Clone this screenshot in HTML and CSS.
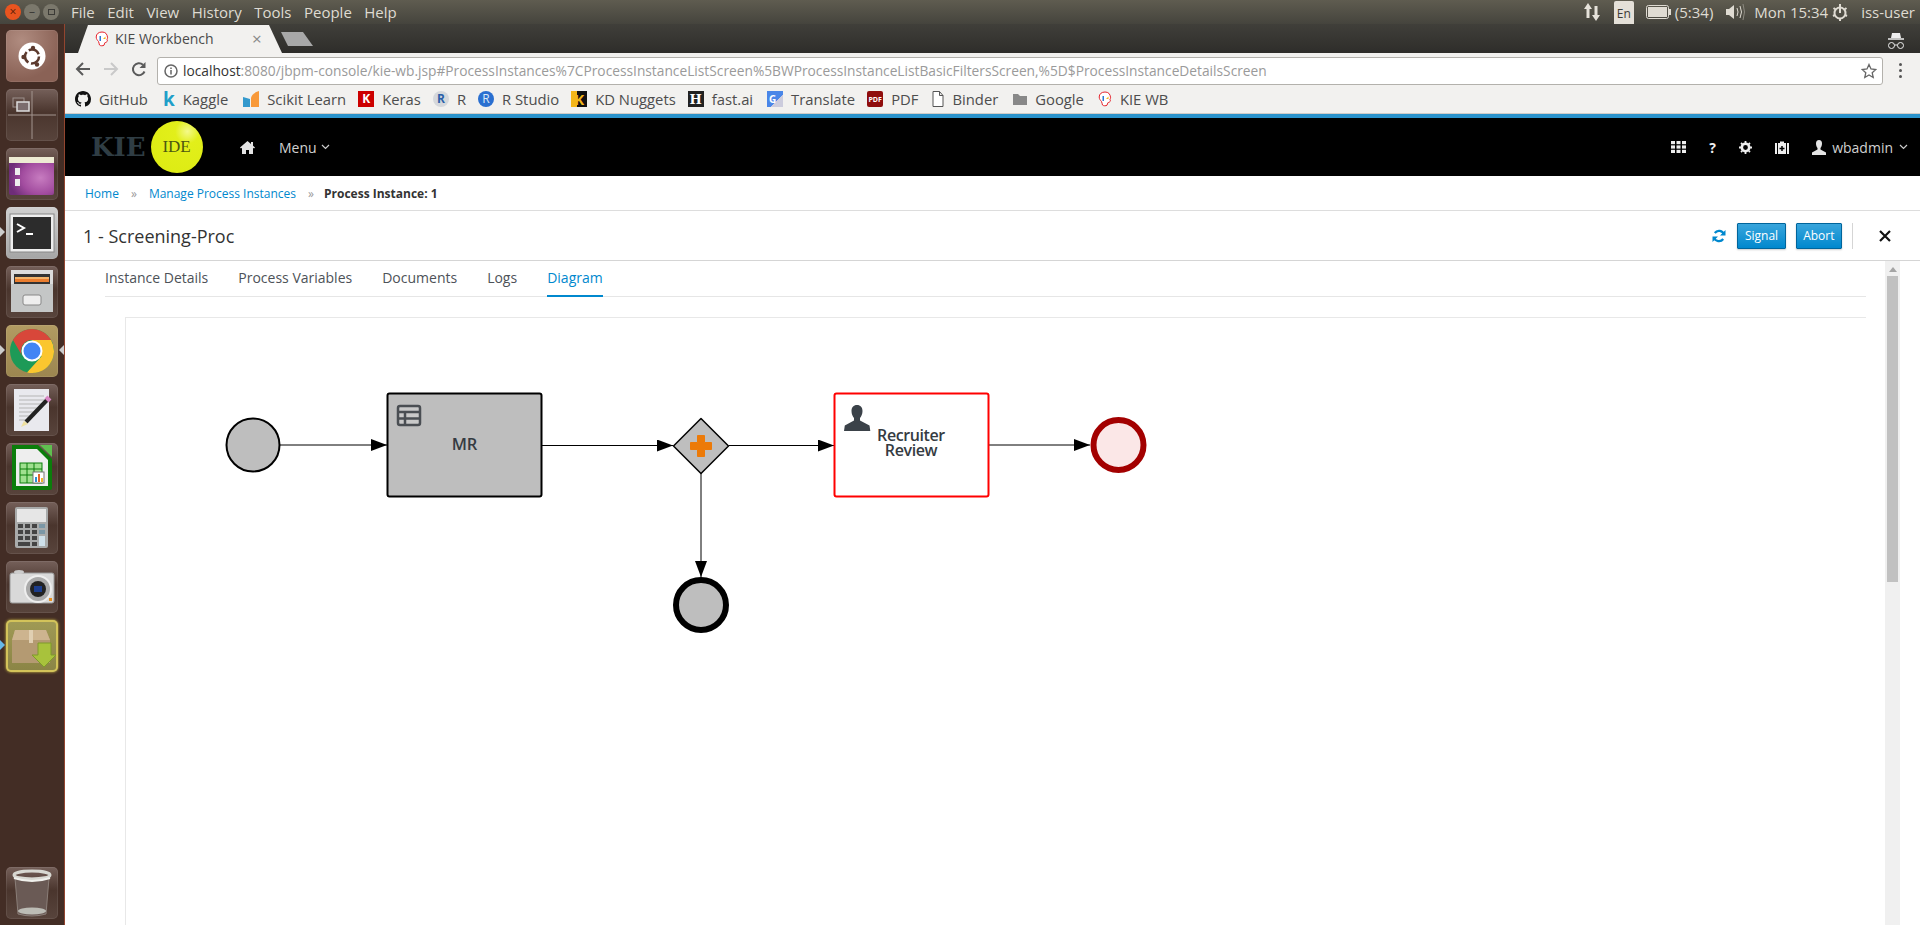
FILE: index.html
```html
<!DOCTYPE html>
<html lang="en">
<head>
    <meta charset="UTF-8">
    <meta name="viewport" content="width=device-width, initial-scale=1.0">
    <title>KIE Workbench</title>
    <link rel="stylesheet" href="styles.css">
</head>
<body>
    <svg class="defs" width="0" height="0">
        <symbol id="kie" viewBox="0 0 14 16">
            <path d="M7 1C3.5 1 1.2 3 1.2 6c0 2 1.300 3.400 2.300 4.500.6.9.5 2.500 1 3.500.8 1 3.500 1 4.500.2.700-.7.300-1.800.8-2.400 1.500-.7 2.500-1 2.600-2 0-.7-.500-1-.4-1.500.2-.8.7-.9.6-1.500C12.300 3 10.500 1 7 1z" fill="#fff" stroke="#e5222c" stroke-width="1"/>
            <rect x="4.500" y="5" width="1.500" height="5" fill="#2b7bd3"/>
            <path d="M8 8h2.500V5.500z" fill="#f3b61a"/>
        </symbol>
    </svg>

    <!-- ubuntu top panel -->
    <header class="panel">
        <div class="winbtns">
            <span class="winbtn close">×</span>
            <span class="winbtn">–</span>
            <span class="winbtn"><i class="maxbox"></i></span>
        </div>
        <nav class="appmenu">
            <span>File</span><span>Edit</span><span>View</span><span>History</span><span>Tools</span><span>People</span><span>Help</span>
        </nav>
        <div class="tray">
            <svg class="tray-arrows" width="18" height="20" viewBox="0 0 18 20"><path d="M5 1L1 7h2.500v9h3V7H9zM13 19l4-6h-2.500V4h-3v9H9z" fill="#e6e2da"/></svg>
            <span class="lang">En</span>
            <span class="battery-wrap">
                <svg width="25" height="14" viewBox="0 0 25 14"><rect x=".5" y=".5" width="22" height="13" rx="2" fill="none" stroke="#dfdbd2"/><rect x="2" y="2" width="19" height="10" fill="#dfdbd2"/><rect x="23" y="4" width="2" height="6" fill="#dfdbd2"/></svg>
                <span>(5:34)</span>
            </span>
            <svg class="tray-speaker" width="20" height="18" viewBox="0 0 20 18"><path d="M1 6h3l5-4v14l-5-4H1z" fill="#dfdbd2"/><path d="M12 5q2 4 0 8M15 3q3 6 0 12" stroke="#dfdbd2" fill="none"/><path d="M18 1q3 8 0 16" stroke="#8d8a80" fill="none"/></svg>
            <span class="clock">Mon 15:34</span>
            <svg class="tray-gear" width="16" height="18" viewBox="0 0 16 18"><circle cx="8" cy="10" r="5.500" fill="none" stroke="#dfdbd2" stroke-width="2"/><path d="M8 1v9" stroke="#dfdbd2" stroke-width="2"/><path d="M8 1v3M1.500 5l2 1.500M14.500 5l-2 1.500M1 13l2-1M15 13l-2-1M8 16v2" stroke="#dfdbd2" stroke-width="2"/></svg>
            <span>iss-user</span>
        </div>
    </header>

    <div class="desktop">
        <!-- launcher -->
        <aside class="launcher">
            <div class="tile tile-ubuntu">
                <svg viewBox="0 0 52 52"><circle cx="26" cy="26" r="13.500" fill="#fff"/><circle cx="26" cy="26.500" r="7" fill="none" stroke="#5c3a2e" stroke-width="2.500" stroke-dasharray="12 2.700"/><circle cx="27" cy="18" r="2.200" fill="#5c3a2e"/><circle cx="17.500" cy="27" r="2.200" fill="#5c3a2e"/><circle cx="31" cy="34.500" r="2.200" fill="#5c3a2e"/></svg>
            </div>
            <div class="tile">
                <svg viewBox="0 0 52 52"><path d="M26 2v48M2 26h48" stroke="#a3958f" stroke-width="1"/><rect x="7" y="9" width="11" height="9" fill="none" stroke="#9c8f8b"/><rect x="11" y="13" width="12" height="9" fill="#7b6d6e" stroke="#ddd" stroke-width="1.500"/></svg>
            </div>
            <div class="tile">
                <svg viewBox="0 0 52 52"><defs><radialGradient id="purple" cx=".7" cy=".55" r=".7"><stop offset="0" stop-color="#c77cc0"/><stop offset=".6" stop-color="#a24c9f"/><stop offset="1" stop-color="#6e2d78"/></radialGradient></defs><rect x="3" y="9" width="45" height="38" rx="2" fill="url(#purple)"/><rect x="3" y="9" width="45" height="6" fill="#edebd3"/><rect x="9" y="20" width="5" height="7" fill="#eee"/><rect x="9" y="31" width="5" height="7" fill="#eee"/></svg>
            </div>
            <div class="tile tile-light marked">
                <svg viewBox="0 0 52 52"><rect x="4" y="7" width="44" height="38" fill="#eee" stroke="#888"/><rect x="7" y="10" width="38" height="32" fill="#2c2c2c"/><path d="M11 17l7 4-7 4" stroke="#fff" stroke-width="2" fill="none"/><path d="M20 27h7" stroke="#fff" stroke-width="2"/></svg>
            </div>
            <div class="tile">
                <svg viewBox="0 0 52 52"><rect x="5" y="4" width="42" height="16" fill="#dcdcdc"/><rect x="8" y="8" width="36" height="12" fill="#333"/><rect x="9" y="11" width="34" height="2" fill="#f2b36a"/><rect x="9" y="13" width="34" height="3" fill="#ea7d2f"/><rect x="5" y="18" width="42" height="28" fill="#c4c6c6"/><rect x="17" y="29" width="18" height="10" rx="2" fill="#eee" stroke="#888"/></svg>
            </div>
            <div class="tile tile-gold marked both">
                <svg viewBox="0 0 52 52"><circle cx="26" cy="26" r="22" fill="#1d9a57"/><path d="M26 15H45A22 22 0 0 1 21 47.500L35.500 31.500Z" fill="#fbc62f"/><path d="M7 15A22 22 0 0 1 45 15H26A11 11 0 0 0 16.500 31.500Z" fill="#d8473a"/><circle cx="26" cy="26" r="10.500" fill="#fff"/><circle cx="26" cy="26" r="8.500" fill="#4285f4"/></svg>
            </div>
            <div class="tile">
                <svg viewBox="0 0 52 52"><rect x="8" y="5" width="35" height="42" fill="#e9e9ee"/><path d="M13 12h25M13 16h25M13 20h25M13 24h20M13 28h16M13 32h12M13 36h10" stroke="#b5b5b5"/><path d="M41 16L20 38" stroke="#222" stroke-width="4"/><path d="M40 13l4 4" stroke="#d987c4" stroke-width="4"/><path d="M15 43l3-6 4 3z" fill="#eee0a0"/></svg>
            </div>
            <div class="tile">
                <svg viewBox="0 0 52 52"><path d="M6 2h26l14 14v29q0 2-2 2H6z" fill="#0b7d0b"/><path d="M10 6h21l11 11v26H10z" fill="#eee"/><path d="M34 2h12v12z" fill="#5fbf4f"/><rect x="14" y="20" width="22" height="20" fill="#9fe08f" stroke="#0b7d0b"/><path d="M14 26h22M14 32h22M21 20v20M28 20v20" stroke="#0b7d0b"/><rect x="27" y="29" width="11" height="11" fill="#fff" stroke="#777"/><rect x="29" y="34" width="2" height="5" fill="#2a8fd4"/><rect x="32" y="31" width="2" height="8" fill="#e2662a"/><rect x="35" y="35" width="2" height="4" fill="#f0b52c"/></svg>
            </div>
            <div class="tile">
                <svg viewBox="0 0 52 52"><rect x="9" y="5" width="33" height="41" rx="2" fill="#a9abab"/><rect x="11" y="7" width="29" height="13" fill="#e6e6e6"/><g fill="#444"><rect x="12" y="22" width="5" height="4"/><rect x="19" y="22" width="5" height="4"/><rect x="26" y="22" width="5" height="4"/><rect x="12" y="28" width="5" height="4"/><rect x="19" y="28" width="5" height="4"/><rect x="26" y="28" width="5" height="4"/><rect x="12" y="34" width="5" height="4"/><rect x="19" y="34" width="5" height="4"/><rect x="26" y="34" width="5" height="4"/><rect x="12" y="40" width="12" height="4"/><rect x="26" y="40" width="5" height="4"/></g><rect x="33" y="22" width="6" height="4" fill="#7b97a6"/><rect x="33" y="28" width="6" height="4" fill="#7b97a6"/><rect x="33" y="34" width="6" height="10" fill="#cfe0ea"/></svg>
            </div>
            <div class="tile">
                <svg viewBox="0 0 52 52"><rect x="4" y="12" width="44" height="30" rx="2" fill="#d9d9d9" stroke="#999"/><ellipse cx="13" cy="11" rx="5" ry="2" fill="#ccc"/><circle cx="32" cy="28" r="13" fill="#aaa" stroke="#eee" stroke-width="2"/><circle cx="32" cy="28" r="8" fill="#222"/><rect x="28" y="25" width="8" height="6" fill="#1c3d8c"/><rect x="43" y="37" width="3" height="3" fill="#e89020"/></svg>
            </div>
            <div class="tile tile-glow marked blue">
                <svg viewBox="0 0 52 52"><path d="M9 10h31l4 10v23H6V20z" fill="#b49a72"/><path d="M9 10h31l4 10H6z" fill="#cdb48f"/><rect x="23" y="10" width="4" height="13" fill="#e0cfb2"/><path d="M32 23h13v12h5L38 47 26 35h6z" fill="#a8c23c" stroke="#7e9a2b"/></svg>
            </div>
            <div class="tile tile-trash">
                <svg viewBox="0 0 52 52"><path d="M9 11l3 36q14 4 28 0l3-36z" fill="#6a5a55" stroke="#8a7e78"/><ellipse cx="26" cy="44" rx="14" ry="3.500" fill="#bcbcb5"/><ellipse cx="26" cy="8" rx="18" ry="4" fill="none" stroke="#d8d8d2" stroke-width="3"/><path d="M8 11q18 6 36 0" stroke="#f0f0ec" stroke-width="2" fill="none"/></svg>
            </div>
        </aside>

        <div class="browser">
            <!-- chrome tab strip -->
            <div class="tabstrip">
                <div class="chrome-tab">
                    <svg class="favicon" width="14" height="16"><use href="#kie"/></svg>
                    <span class="chrome-tab-title">KIE Workbench</span>
                    <span class="chrome-tab-close">×</span>
                </div>
                <div class="newtab"></div>
                <svg class="incognito" width="20" height="20" viewBox="0 0 20 20"><path d="M6 2h8l1 5H5z" fill="#eee"/><path d="M2 8h16" stroke="#eee" stroke-width="1.500"/><circle cx="5.500" cy="14.500" r="3" fill="none" stroke="#eee"/><circle cx="14.500" cy="14.500" r="3" fill="none" stroke="#eee"/><path d="M8.500 14h3" stroke="#eee"/></svg>
            </div>

            <div class="toolbar">
                <svg class="tool" width="18" height="18" viewBox="0 0 18 18"><path d="M16 9H3M9 3L3 9l6 6" stroke="#5a5a5a" stroke-width="2" fill="none"/></svg>
                <svg class="tool" width="18" height="18" viewBox="0 0 18 18"><path d="M2 9h13M9 3l6 6-6 6" stroke="#c9c9c9" stroke-width="2" fill="none"/></svg>
                <svg class="tool" width="18" height="18" viewBox="0 0 18 18"><path d="M14.500 11.500A6 6 0 1 1 13 4.800" stroke="#5a5a5a" stroke-width="2" fill="none"/><path d="M15.500 2v6h-6z" fill="#5a5a5a"/></svg>
                <div class="urlbar">
                    <svg width="14" height="14" viewBox="0 0 14 14"><circle cx="7" cy="7" r="6" fill="none" stroke="#666" stroke-width="1.500"/><path d="M7 6v4.500M7 3.500v1.500" stroke="#666" stroke-width="1.500"/></svg>
                    <span class="url"><b>localhost</b>:8080/jbpm-console/kie-wb.jsp#ProcessInstances%7CProcessInstanceListScreen%5BWProcessInstanceListBasicFiltersScreen,%5D$ProcessInstanceDetailsScreen</span>
                    <svg class="star" width="16" height="16" viewBox="0 0 16 16"><path d="M8 1.500l2 4.500 4.800.5-3.600 3.200 1 4.800L8 12l-4.200 2.500 1-4.800L1.200 6.500 6 6z" fill="none" stroke="#666" stroke-width="1.300"/></svg>
                </div>
                <div class="kebab"><i></i><i></i><i></i></div>
            </div>

            <div class="bookmarks">
                <span class="bm"><svg width="16" height="16" viewBox="0 0 16 16"><path d="M8 0C3.580 0 0 3.580 0 8c0 3.540 2.290 6.530 5.470 7.590.4.070.55-.17.55-.38 0-.19-.01-.82-.01-1.490-2.010.37-2.530-.49-2.690-.94-.09-.23-.48-.94-.82-1.130-.28-.15-.68-.52-.01-.53.63-.01 1.080.58 1.230.82.720 1.210 1.870.87 2.330.66.070-.52.280-.87.510-1.070-1.780-.2-3.640-.89-3.640-3.950 0-.87.310-1.590.820-2.150-.08-.2-.36-1.020.08-2.120 0 0 .67-.21 2.200.82.640-.18 1.320-.27 2-.27.680 0 1.360.09 2 .27 1.530-1.040 2.200-.82 2.200-.82.440 1.100.160 1.920.080 2.120.510.560.820 1.270.820 2.150 0 3.070-1.870 3.750-3.650 3.950.290.250.540.730.540 1.480 0 1.070-.01 1.930-.01 2.200 0 .210.150.460.550.380A8.013 8.013 0 0 0 16 8c0-4.420-3.580-8-8-8z" fill="#111"/></svg>GitHub</span>
                <span class="bm"><i class="fav fav-kaggle">k</i>Kaggle</span>
                <span class="bm bm-scikit"><svg width="16" height="16" viewBox="0 0 16 16"><path d="M0 6l7 2v8H0z" fill="#3499cd"/><path d="M8 16V7q1-5 8-7v16z" fill="#f89939"/></svg>Scikit Learn</span>
                <span class="bm"><i class="fav fav-keras">K</i>Keras</span>
                <span class="bm"><i class="fav fav-r">R</i>R</span>
                <span class="bm"><i class="fav fav-rstudio">R</i>R Studio</span>
                <span class="bm"><i class="fav fav-kd">K</i>KD Nuggets</span>
                <span class="bm"><i class="fav fav-fast">H</i>fast.ai</span>
                <span class="bm bm-translate"><i class="fav fav-translate">G</i>Translate</span>
                <span class="bm"><i class="fav fav-pdf">PDF</i>PDF</span>
                <span class="bm bm-binder"><svg width="12" height="16" viewBox="0 0 12 16"><path d="M1 .5h6.500L11 4.500v11H1zM7.500.5v4H11" fill="#fff" stroke="#555"/></svg>Binder</span>
                <span class="bm bm-google"><svg width="14" height="14" viewBox="0 0 14 14"><path d="M0 2h5l2 2h7v9H0z" fill="#888"/></svg>Google</span>
                <span class="bm bm-kie"><svg width="14" height="16"><use href="#kie"/></svg>KIE WB</span>
            </div>

            <!-- workbench -->
            <div class="navbar">
                <div class="logo">
                    <span class="logo-kie">KIE</span>
                    <span class="logo-ball">IDE</span>
                </div>
                <svg class="nav-home" width="15" height="13" viewBox="0 0 15 13"><path d="M7.500 0L0 6.500l1 1 1-.8V13h4V9h3v4h4V6.700l1 .8 1-1-2-1.800V1h-2v2z" fill="#e4e4e4"/></svg>
                <span class="nav-menu">Menu<svg class="caret" width="9" height="6" viewBox="0 0 9 6"><path d="M1 1l3.500 3.500L8 1" fill="none" stroke="#ccc" stroke-width="1.200"/></svg></span>
                <div class="nav-right">
                    <svg width="15" height="12" viewBox="0 0 15 12" fill="#eee"><rect width="4" height="3.200"/><rect x="5.500" width="4" height="3.200"/><rect x="11" width="4" height="3.200"/><rect y="4.400" width="4" height="3.200"/><rect x="5.500" y="4.400" width="4" height="3.200"/><rect x="11" y="4.400" width="4" height="3.200"/><rect y="8.800" width="4" height="3.200"/><rect x="5.500" y="8.800" width="4" height="3.200"/><rect x="11" y="8.800" width="4" height="3.200"/></svg>
                    <span class="nav-help">?</span>
                    <svg width="13" height="13" viewBox="0 0 13 13"><circle cx="6.500" cy="6.500" r="3.700" fill="none" stroke="#eee" stroke-width="2.600"/><path d="M6.500 0v13M0 6.500h13M2 2l9 9M11 2l-9 9" stroke="#eee" stroke-width="1.800" stroke-dasharray="2 9"/></svg>
                    <svg width="14" height="13" viewBox="0 0 14 13"><path d="M5 2V.5h4V2h5v11H0V2z" fill="#eee"/><path d="M2.500 2v11M11.500 2v11" stroke="#000"/><path d="M7 5v5M4.500 7.500h5" stroke="#000" stroke-width="1.500"/></svg>
                    <span class="nav-user">
                        <svg width="14" height="15" viewBox="0 0 14 15"><path d="M7 0c2 0 3 1.500 3 3.500 0 2-.8 3.500-1.500 4.500v1.500L14 12.500V15H0v-2.500l5.500-3V8C4.800 7 4 5.500 4 3.500 4 1.500 5 0 7 0z" fill="#e4e4e4"/></svg>
                        wbadmin<svg class="caret" width="9" height="6" viewBox="0 0 9 6"><path d="M1 1l3.500 3.500L8 1" fill="none" stroke="#ccc" stroke-width="1.200"/></svg>
                    </span>
                </div>
            </div>

            <div class="crumbs">
                <a>Home</a><span class="sep">»</span><a>Manage Process Instances</a><span class="sep">»</span><strong>Process Instance: 1</strong>
            </div>

            <div class="titlebar">
                <h1>1 - Screening-Proc</h1>
                <div class="actions">
                    <svg class="refresh" width="14" height="14" viewBox="0 0 14 14"><path d="M12 5.500A5.200 5.200 0 0 0 2.800 4M2 8.500A5.200 5.200 0 0 0 11.200 10" fill="none" stroke="#0088ce" stroke-width="2.200"/><path d="M13.500 1v5.500H8zM.5 13V7.500H6z" fill="#0088ce"/></svg>
                    <button class="btn">Signal</button>
                    <button class="btn">Abort</button>
                    <span class="divider"></span>
                    <svg class="closex" width="12" height="12" viewBox="0 0 12 12"><path d="M1 1l10 10M11 1L1 11" stroke="#111" stroke-width="2.200"/></svg>
                </div>
            </div>

            <div class="detail">
                <div class="detail-main">
                    <ul class="tabs">
                        <li>Instance Details</li>
                        <li>Process Variables</li>
                        <li>Documents</li>
                        <li>Logs</li>
                        <li class="active">Diagram</li>
                    </ul>
                    <div class="canvas">
                        <!-- viewBox is in page coords so shapes are easy to read off -->
                        <svg class="diagram" width="1740" height="607" viewBox="126 318 1740 607">
                            <defs>
                                <marker id="arrow" markerUnits="userSpaceOnUse" markerWidth="16" markerHeight="12" refX="16" refY="6" orient="auto"><path d="M0 0L16 6L0 12z" fill="#000"/></marker>
                            </defs>
                            <line class="flow" x1="280" y1="445" x2="387" y2="445" marker-end="url(#arrow)"/>
                            <line class="flow" x1="542" y1="445.500" x2="673" y2="445.500" marker-end="url(#arrow)"/>
                            <line class="flow" x1="729" y1="445.500" x2="834" y2="445.500" marker-end="url(#arrow)"/>
                            <line class="flow" x1="701" y1="473" x2="701" y2="577" marker-end="url(#arrow)"/>
                            <line class="flow" x1="989" y1="445" x2="1090" y2="445" marker-end="url(#arrow)"/>

                            <circle cx="253" cy="445" r="26.500" fill="#bebebe" stroke="#000" stroke-width="2"/>

                            <rect x="387.500" y="393.500" width="154" height="103" rx="2" fill="#bebebe" stroke="#000" stroke-width="2"/>
                            <g fill="none" stroke="#4a4e53" stroke-width="2.500"><rect x="398" y="406" width="22" height="19" rx="2" fill="#c9c9c9"/><path d="M398 412h22M398 418.500h22M405 412v13"/></g>
                            <text class="node-label mr" x="464.500" y="450" text-anchor="middle">MR</text>

                            <path d="M701 418.500L728.500 446L701 473.500L673.500 446z" fill="#bebebe" stroke="#000" stroke-width="1.500" stroke-linejoin="round"/>
                            <path d="M697.500 435.500h7v7h7v7h-7v7h-7v-7h-7v-7h7z" fill="#ec7a08" stroke="#ec7a08" stroke-linejoin="round"/>

                            <rect x="834.500" y="393.500" width="154" height="103" rx="2" fill="#fff" stroke="#f00" stroke-width="2"/>
                            <path d="M857 405c3.500 0 5.500 2.500 5.500 6 0 3-1.200 5.500-2.500 7v2.500l9.500 5 .8 5.500H844l.8-5.500 9.200-5V418c-1.300-1.500-2.500-4-2.500-7 0-3.500 2-6 5.500-6z" fill="#3b4249"/>
                            <text class="node-label" text-anchor="middle"><tspan x="911" y="441">Recruiter</tspan><tspan x="911" y="456">Review</tspan></text>

                            <circle cx="1118.500" cy="445" r="25" fill="#fbe7e7" stroke="#a30000" stroke-width="6"/>
                            <circle cx="701" cy="605" r="25" fill="#bebebe" stroke="#000" stroke-width="6"/>
                        </svg>
                    </div>
                </div>
                <div class="scrollbar">
                    <span class="scroll-up"></span>
                    <span class="scroll-thumb"></span>
                </div>
            </div>
        </div>
    </div>
</body>
</html>
```

FILE: styles.css
```css
*{
    box-sizing: border-box;
    font-family: 'Open Sans', 'Noto Sans', sans-serif;
}

html, body{
    margin: 0;
    height: 925px;
    overflow: hidden;
    background-color: #fff;
}

.defs{
    display: block;
    height: 0;
}

/* top panel */
.panel{
    height: 24px;
    display: flex;
    align-items: center;
    background: linear-gradient(#5f5c50, #45443d);
    color: #dfdbd2;
    font-size: 15px;
}

.winbtns{
    display: flex;
    gap: 3px;
    padding-left: 5px;
    width: 71px;
}

.winbtn{
    width: 16px;
    height: 16px;
    border-radius: 50%;
    background-color: #7b786c;
    color: #3c3b37;
    display: flex;
    align-items: center;
    justify-content: center;
    font-size: 12px;
    line-height: 1;
}

.winbtn.close{
    background-color: #e9541f;
    color: #5a1c05;
}

.maxbox{
    width: 7px;
    height: 6px;
    border: 1px solid #3c3b37;
}

.appmenu{
    display: flex;
    gap: 12.5px;
}

.tray{
    margin-left: auto;
    display: flex;
    align-items: center;
    padding-right: 5px;
}

.lang{
    width: 20px;
    height: 25px;
    margin: 2px 12px 0 13px;
    display: flex;
    align-items: center;
    justify-content: center;
    border-radius: 2px;
    background-color: #e4e0d8;
    color: #3c3b37;
    font-size: 12px;
}

.battery-wrap{
    display: flex;
    align-items: center;
    gap: 4px;
}

.tray-speaker{
    margin: 0 9px 0 12px;
}

.tray-gear{
    margin: 0 13px 0 4px;
}

/* launcher */
.desktop{
    display: flex;
    height: 901px;
}

.launcher{
    width: 65px;
    flex: none;
    background-color: #432d25;
    border-right: 1px solid #93452f;
    padding: 6px 0 6px 6px;
    display: flex;
    flex-direction: column;
    gap: 7px;
}

.tile{
    position: relative;
    width: 52px;
    height: 52px;
    border-radius: 5px;
    background: linear-gradient(#75605a, #4a352d 45%, #58443c);
    box-shadow: inset 0 0 0 1px rgba(255,255,255,0.08);
}

.tile svg{
    display: block;
    width: 52px;
    height: 52px;
}

.tile-ubuntu{
    background: radial-gradient(circle at 30% 20%, #b08c80, #8a6256 70%);
}

.tile-light{
    background: linear-gradient(#d0d0d0, #a5a5a5);
}

.tile-gold{
    background: linear-gradient(#b29b62, #9c8650);
}

.tile-glow{
    background: linear-gradient(#a09a55, #8a8445);
    box-shadow: 0 0 3px #dcc94a, inset 0 0 0 2px #d3c35a;
}

.tile-trash{
    margin-top: auto;
}

.marked::before{
    content: '';
    position: absolute;
    left: -6px;
    top: 20px;
    border: 5px solid transparent;
    border-left-color: #ccc;
    border-right-width: 0;
}

.marked.both::after{
    content: '';
    position: absolute;
    right: -6px;
    top: 20px;
    border: 5px solid transparent;
    border-right-color: #ccc;
    border-left-width: 0;
}

.marked.blue::before{
    border-left-color: #66b8e8;
}

/* browser */
.browser{
    flex: 1;
    min-width: 0;
    display: flex;
    flex-direction: column;
}

.tabstrip{
    height: 29px;
    flex: none;
    display: flex;
    align-items: flex-end;
    padding-left: 13px;
    background: linear-gradient(#403f3a, #2e2d2a);
}

.chrome-tab{
    width: 204px;
    height: 28px;
    display: flex;
    align-items: center;
    padding: 0 0 1px 17px;
    background-color: #f2f1ef;
    clip-path: polygon(0 100%, 10px 0, 191px 0, 204px 100%);
    color: #4a4a4a;
    font-size: 14px;
}

.favicon{
    flex: none;
}

.chrome-tab-title{
    margin-left: 6px;
    width: 128px;
}

.chrome-tab-close{
    color: #888;
    font-size: 17px;
    line-height: 1;
    margin-left: 9px;
}

.newtab{
    width: 32px;
    height: 14px;
    margin: 0 0 7px -1px;
    background-color: #a8a8a8;
    clip-path: polygon(0 0, 22px 0, 32px 100%, 7px 100%);
}

.incognito{
    margin: 0 14px 2px auto;
}

.toolbar{
    height: 32px;
    flex: none;
    display: flex;
    align-items: center;
    background-color: #f2f1ef;
    padding: 0 0 0 9px;
    gap: 10px;
}

.urlbar{
    width: 1726px;
    height: 28px;
    margin-left: -1px;
    margin-top: 3px;
    display: flex;
    align-items: center;
    padding: 0 5px 0 6px;
    gap: 5px;
    background-color: #fff;
    border: 1px solid #b3b1ac;
    border-radius: 3px;
    font-size: 13.75px;
    color: #9a9a9a;
}

.url{
    flex: 1;
    white-space: nowrap;
}

.url b{
    font-weight: 400;
    color: #333;
}

.kebab{
    display: flex;
    flex-direction: column;
    gap: 3px;
    margin-left: 6px;
    margin-top: 3px;
}

.kebab i{
    width: 3px;
    height: 3px;
    border-radius: 50%;
    background-color: #555;
}

.bookmarks{
    height: 29px;
    flex: none;
    display: flex;
    align-items: center;
    gap: 12px;
    padding-left: 10px;
    background-color: #f2f1ef;
    border-bottom: 1px solid #cfcdc9;
    color: #4d4d4d;
    font-size: 14.8px;
}

.bm{
    display: flex;
    align-items: center;
    gap: 8px;
    white-space: nowrap;
}

.bm-scikit{
    margin-left: 3px;
}

.bm-translate, .bm-binder, .bm-kie{
    margin-left: 2px;
}

.bm-google{
    margin-left: 3px;
}

.fav{
    width: 16px;
    height: 16px;
    display: flex;
    align-items: center;
    justify-content: center;
    flex: none;
    font-style: normal;
    font-weight: 700;
    font-size: 12px;
    line-height: 1;
}

.fav-kaggle{
    color: #1f9fc9;
    font-size: 19px;
    width: 12px;
    margin-left: 3px;
}

.fav-keras{
    background-color: #c00;
    color: #fff;
}

.fav-r{
    border-radius: 50%;
    background-color: #d5d8dc;
    color: #2b5fa8;
}

.fav-rstudio{
    border-radius: 50%;
    background-color: #2a6fd0;
    color: #dbe8f8;
    font-weight: 400;
}

.fav-kd{
    background: linear-gradient(90deg, #f3b61a 40%, #111 40%);
    color: #f3b61a;
    font-size: 15px;
}

.fav-fast{
    background-color: #222;
    color: #fff;
    font-family: 'DejaVu Serif', serif;
    font-size: 13px;
}

.fav-translate{
    background: linear-gradient(135deg, #4a86e8 60%, #ccd 60%);
    color: #fff;
    font-size: 10px;
    justify-content: flex-start;
    padding-left: 2px;
}

.fav-pdf{
    background-color: #8f0d0d;
    border-radius: 2px;
    color: #fff;
    font-size: 7px;
}

/* workbench nav */
.navbar{
    height: 62px;
    flex: none;
    display: flex;
    align-items: center;
    background-color: #000;
    border-top: 4px solid #2a93cc;
    padding-left: 26px;
    color: #d1d1d1;
    font-size: 14px;
}

.logo{
    display: flex;
    align-items: center;
    gap: 5px;
    width: 149px;
}

.logo-kie{
    font-family: 'DejaVu Serif', serif;
    font-weight: 700;
    font-size: 26px;
    color: #2f3d44;
}

.logo-ball{
    width: 52px;
    height: 52px;
    border-radius: 50%;
    display: flex;
    align-items: center;
    justify-content: center;
    background: radial-gradient(circle at 70% 20%, #f4f98a 0, #e2ef1a 22%, #dcea12 100%);
    font-family: 'Liberation Serif', serif;
    font-size: 17px;
    color: #4d5710;
}

.nav-home{
    flex: none;
}

.nav-menu{
    margin-left: 24px;
    display: flex;
    align-items: center;
    gap: 4px;
}

.nav-right{
    margin-left: auto;
    display: flex;
    align-items: center;
    gap: 23px;
    padding-right: 12px;
}

.nav-help{
    color: #eee;
    font-weight: 700;
    font-size: 14px;
    width: 7px;
}

.nav-user{
    display: flex;
    align-items: center;
    gap: 6px;
}

.crumbs{
    height: 35px;
    flex: none;
    display: flex;
    align-items: center;
    padding-left: 20px;
    border-bottom: 1px solid #ddd;
    font-size: 12px;
    color: #333;
}

.crumbs a{
    color: #0088ce;
}

.crumbs .sep{
    color: #999;
    margin: 0 12px;
}

.crumbs strong{
    margin-left: -2px;
}

.titlebar{
    height: 50px;
    flex: none;
    display: flex;
    align-items: center;
    justify-content: space-between;
    padding: 0 29px 0 18px;
    border-bottom: 1px solid #d5d5d5;
}

.titlebar h1{
    margin: 0;
    font-size: 18px;
    font-weight: 400;
    color: #333;
}

.actions{
    display: flex;
    align-items: center;
}

.refresh{
    margin-right: 11px;
}

.btn{
    height: 26px;
    padding: 0 6.5px;
    margin-left: 0;
    margin-right: 10px;
    border: 1px solid #00659c;
    border-radius: 1px;
    background: linear-gradient(#39a5dc, #0088ce);
    box-shadow: 0 1px 2px rgba(3,3,3,0.2);
    color: #fff;
    font-size: 12px;
}

.divider{
    width: 1px;
    height: 26px;
    background-color: #d5d5d5;
    margin-right: 26px;
}

/* detail area */
.detail{
    flex: 1;
    min-height: 0;
    display: flex;
}

.detail-main{
    flex: 1;
    min-width: 0;
    padding: 0 19px 0 40px;
}

.tabs{
    list-style: none;
    margin: 0;
    padding: 0;
    height: 36px;
    display: flex;
    gap: 30px;
    border-bottom: 1px solid #e6e6e6;
    font-size: 14px;
    color: #4d5258;
}

.tabs li{
    padding-top: 7px;
}

.tabs .active{
    color: #0088ce;
    border-bottom: 2px solid #0088ce;
    height: 36px;
}

.canvas{
    margin: 20px 0 0 20px;
    border-top: 1px solid #e8e8e8;
    border-left: 1px solid #e8e8e8;
    height: 620px;
}

.diagram{
    display: block;
}

.flow{
    stroke: #000;
    stroke-width: 1;
}

.node-label{
    font-size: 16px;
    font-weight: 600;
    letter-spacing: -0.4px;
    fill: #353b42;
}

.node-label.mr{
    font-size: 16.5px;
    letter-spacing: -0.2px;
}

.scrollbar{
    position: relative;
    width: 15px;
    flex: none;
    margin-right: 20px;
    background-color: #f0f0f0;
    padding: 15px 2px 0;
}

.scroll-up{
    position: absolute;
    top: 6px;
    left: 4px;
    border: 4px solid transparent;
    border-bottom: 5px solid #a5a5a5;
    border-top-width: 0;
}

.scroll-thumb{
    display: block;
    height: 306px;
    background-color: #c1c1c1;
}
```
